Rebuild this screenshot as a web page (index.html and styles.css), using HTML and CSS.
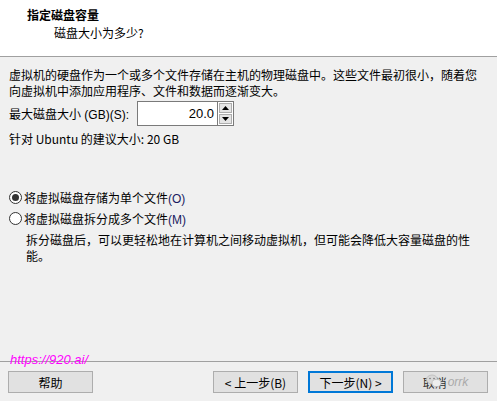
FILE: index.html
```html
<!DOCTYPE html>
<html lang="zh">
<head>
<meta charset="utf-8">
<link rel="stylesheet" href="styles.css">
</head>
<body>
<div class="dialog">
  <div class="header">
    <div class="title">指定磁盘容量</div>
    <div class="subtitle">磁盘大小为多少?</div>
  </div>
  <div class="content">
    <p class="intro">虚拟机的硬盘作为一个或多个文件存储在主机的物理磁盘中。这些文件最初很小，随着您向虚拟机中添加应用程序、文件和数据而逐渐变大。</p>
    <div class="size-row">
      <span class="label">最大磁盘大小 (GB)(S):</span>
      <div class="spin">
        <div class="spin-input">20.0</div>
        <div class="spin-btns">
          <div class="spin-btn"><svg width="7" height="4" viewBox="0 0 7 4"><path d="M3.5 0 L7 4 L0 4 Z" fill="#000"/></svg></div>
          <div class="spin-btn"><svg width="7" height="4" viewBox="0 0 7 4"><path d="M0 0 L7 0 L3.5 4 Z" fill="#000"/></svg></div>
        </div>
      </div>
    </div>
    <div class="recommend">针对 Ubuntu 的建议大小: 20 GB</div>
    <div class="options">
      <label class="radio"><span class="dot checked"></span><span>将虚拟磁盘存储为单个文件<span class="acc">(O)</span></span></label>
      <label class="radio"><span class="dot"></span><span>将虚拟磁盘拆分成多个文件<span class="acc">(M)</span></span></label>
      <p class="desc">拆分磁盘后，可以更轻松地在计算机之间移动虚拟机，但可能会降低大容量磁盘的性能。</p>
    </div>
  </div>
  <div class="footer">
    <div class="watermark">https://920.ai/</div>
    <div class="buttons">
      <div class="btn">帮助</div>
      <div class="spacer"></div>
      <div class="btn">&lt; 上一步(B)</div>
      <div class="btn primary">下一步(N) &gt;</div>
      <div class="btn cancel">
        <svg class="wm-icon" width="16" height="14" viewBox="0 0 16 14"><ellipse cx="6" cy="5.5" rx="5.5" ry="4.5" fill="#d8d8d8" stroke="#bbb" stroke-width="0.8"/><ellipse cx="10.5" cy="9" rx="4.5" ry="3.6" fill="#eee" stroke="#bbb" stroke-width="0.8"/><circle cx="4" cy="4.5" r="0.8" fill="#777"/><circle cx="8" cy="4.5" r="0.8" fill="#777"/></svg>
        <span>取消</span><span class="wm2">orrk</span>
      </div>
    </div>
  </div>
</div>
</body>
</html>
```

FILE: styles.css
```css
* { box-sizing: border-box; }
html, body { margin: 0; padding: 0; }
body {
  width: 497px;
  height: 401px;
  background: #f0f0f0;
  font-family: "Noto Sans CJK SC", "Noto Sans", sans-serif;
  font-size: 12px;
  color: #000;
  overflow: hidden;
}
.dialog { display: flex; flex-direction: column; height: 401px; }
.header {
  background: #fff;
  height: 57px;
  border-bottom: 1px solid #a0a0a0;
  padding: 6px 0 0 27px;
}
.title { font-weight: bold; line-height: 17px; }
.subtitle { padding-left: 27px; line-height: 17px; margin-top: 1px; }
.content { padding: 10px 9px 0 9px; flex: 1; }
.intro { margin: 0; line-height: 16px; width: 470px; }
.size-row { display: flex; align-items: center; margin-top: 2px; height: 25px; }
.label {
  flex: 0 0 128px;
  white-space: nowrap;
  font-family: "Liberation Sans", "Noto Sans CJK SC", sans-serif;
}
.spin { display: flex; height: 25px; }
.spin-input {
  width: 80px;
  height: 25px;
  background: #fff;
  border: 1px solid #7a7a7a;
  border-right: none;
  text-align: right;
  padding-right: 3px;
  line-height: 23px;
  font-family: "Liberation Sans", "Noto Sans", sans-serif;
  font-size: 13px;
}
.spin-btns {
  width: 17px;
  border: 1px solid #7a7a7a;
  display: flex;
  flex-direction: column;
  background: #fff;
  padding: 1px;
  gap: 1px;
}
.spin-btn {
  flex: 1;
  background: #e5e5e5;
  border: 1px solid #adadad;
  display: flex;
  align-items: center;
  justify-content: center;
}
.recommend { margin-top: 5px; line-height: 16px; }
.options { margin-top: 40px; }
.radio { display: flex; align-items: center; height: 21px; }
.dot {
  width: 13px; height: 13px;
  border: 1px solid #333;
  border-radius: 50%;
  background: #fff;
  margin-right: 2px;
  position: relative;
}
.dot.checked::after {
  content: "";
  position: absolute;
  left: 2px; top: 2px;
  width: 7px; height: 7px;
  border-radius: 50%;
  background: #333;
}
.acc { color: #1a1a60; font-family: "Liberation Sans", sans-serif; }
.desc { margin: 3px 0 0 17px; line-height: 16px; width: 450px; }
.footer { position: relative; border-top: 1px solid #a0a0a0; height: 40px; }
.watermark {
  position: absolute;
  left: 10px; top: -10px;
  color: #ff00ff;
  font-family: "Liberation Sans", sans-serif;
  font-style: italic;
  font-size: 13px;
}
.buttons { display: flex; padding: 9px 9px 0 8px; gap: 10px; }
.spacer { flex: 1; }
.btn {
  width: 85px;
  height: 22px;
  background: #e1e1e1;
  border: 1px solid #adadad;
  display: flex;
  align-items: center;
  justify-content: center;
  position: relative;
}
.btn.primary { border: 2px solid #0078d7; }
.cancel { color: #333; }
.wm-icon { position: absolute; left: 22px; top: 2px; }
.wm2 { color: #aaa; font-family: "Liberation Sans", sans-serif; font-size: 12px; font-style: italic; margin-left: 1px; }
```
